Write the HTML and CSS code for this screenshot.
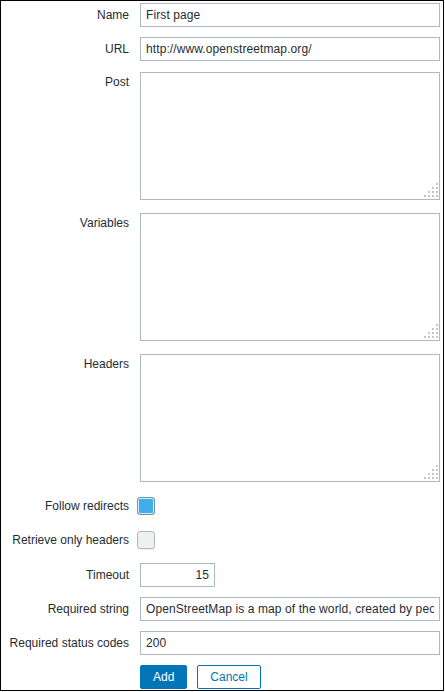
FILE: index.html
```html
<!DOCTYPE html>
<html>
<head>
<meta charset="utf-8">
<link rel="stylesheet" href="styles.css">
</head>
<body>
<div class="frame">
  <form class="form">
    <div class="row r-first">
      <label class="lbl">Name</label>
      <input class="field" type="text" value="First page">
    </div>
    <div class="row">
      <label class="lbl">URL</label>
      <input class="field" type="text" value="http://www.openstreetmap.org/">
    </div>
    <div class="row r-area1 mb3">
      <label class="lbl lbl-top">Post</label>
      <div class="area-wrap">
        <textarea class="area"></textarea>
        <svg class="grip" width="14" height="14" viewBox="0 0 14 14"><g fill="#c3c6c8"><rect x="12" y="0" width="2" height="2"/><rect x="8" y="4" width="2" height="2"/><rect x="12" y="4" width="2" height="2"/><rect x="4" y="8" width="2" height="2"/><rect x="8" y="8" width="2" height="2"/><rect x="12" y="8" width="2" height="2"/><rect x="0" y="12" width="2" height="2"/><rect x="4" y="12" width="2" height="2"/><rect x="8" y="12" width="2" height="2"/><rect x="12" y="12" width="2" height="2"/></g></svg>
      </div>
    </div>
    <div class="row mb3">
      <label class="lbl lbl-top">Variables</label>
      <div class="area-wrap">
        <textarea class="area"></textarea>
        <svg class="grip" width="14" height="14" viewBox="0 0 14 14"><g fill="#c3c6c8"><rect x="12" y="0" width="2" height="2"/><rect x="8" y="4" width="2" height="2"/><rect x="12" y="4" width="2" height="2"/><rect x="4" y="8" width="2" height="2"/><rect x="8" y="8" width="2" height="2"/><rect x="12" y="8" width="2" height="2"/><rect x="0" y="12" width="2" height="2"/><rect x="4" y="12" width="2" height="2"/><rect x="8" y="12" width="2" height="2"/><rect x="12" y="12" width="2" height="2"/></g></svg>
      </div>
    </div>
    <div class="row">
      <label class="lbl lbl-top">Headers</label>
      <div class="area-wrap">
        <textarea class="area"></textarea>
        <svg class="grip" width="14" height="14" viewBox="0 0 14 14"><g fill="#c3c6c8"><rect x="12" y="0" width="2" height="2"/><rect x="8" y="4" width="2" height="2"/><rect x="12" y="4" width="2" height="2"/><rect x="4" y="8" width="2" height="2"/><rect x="8" y="8" width="2" height="2"/><rect x="12" y="8" width="2" height="2"/><rect x="0" y="12" width="2" height="2"/><rect x="4" y="12" width="2" height="2"/><rect x="8" y="12" width="2" height="2"/><rect x="12" y="12" width="2" height="2"/></g></svg>
      </div>
    </div>
    <div class="row r-check1">
      <label class="lbl">Follow redirects</label>
      <span class="check checked"></span>
    </div>
    <div class="row r-check2">
      <label class="lbl">Retrieve only headers</label>
      <span class="check"></span>
    </div>
    <div class="row r-timeout">
      <label class="lbl">Timeout</label>
      <input class="field field-short" type="text" value="15">
    </div>
    <div class="row">
      <label class="lbl">Required string</label>
      <input class="field" type="text" value="OpenStreetMap is a map of the world, created by people like you">
    </div>
    <div class="row">
      <label class="lbl">Required status codes</label>
      <input class="field" type="text" value="200">
    </div>
    <div class="row">
      <span class="lbl"></span>
      <div class="buttons">
        <button type="button" class="btn btn-primary">Add</button>
        <button type="button" class="btn btn-alt">Cancel</button>
      </div>
    </div>
  </form>
</div>
</body>
</html>
```

FILE: styles.css
```css
html, body {
  margin: 0;
  padding: 0;
  background: #ffffff;
}

.frame {
  box-sizing: border-box;
  width: 444px;
  height: 691px;
  border: 1px solid #000000;
  background: #ffffff;
  font-family: "Liberation Sans", Arial, sans-serif;
  font-size: 12px;
  color: #1f2c33;
}

.form {
  display: flex;
  flex-direction: column;
  gap: 10px;
  margin: 0;
}

.row {
  display: flex;
  align-items: flex-start;
  gap: 10px;
  min-height: 24px;
}

.r-first { margin-top: 2px; }
.r-area1 { margin-top: 1px; }
.mb3 { margin-bottom: 3px; }
.r-check1 { margin-top: 2px; }
.r-timeout { margin-top: 1px; }

.r-check1, .r-check2 {
  align-items: center;
  height: 24px;
}

.lbl {
  box-sizing: border-box;
  flex: 0 0 129px;
  width: 129px;
  padding-right: 1px;
  text-align: right;
  line-height: 24px;
  white-space: nowrap;
}

.lbl-top {
  line-height: 20px;
}

.field {
  box-sizing: border-box;
  width: 300px;
  height: 24px;
  margin: 0;
  padding: 0 5px;
  border: 1px solid #acbbc2;
  border-radius: 0;
  background: #ffffff;
  font-family: "Liberation Sans", Arial, sans-serif;
  font-size: 12px;
  letter-spacing: 0.1px;
  color: #1f2c33;
  outline: none;
}

.field-short {
  width: 75px;
  text-align: right;
}

.area-wrap {
  position: relative;
  width: 300px;
  height: 128px;
}

.area {
  display: block;
  box-sizing: border-box;
  width: 300px;
  height: 128px;
  margin: 0;
  padding: 3px 5px;
  border: 1px solid #acbbc2;
  border-radius: 0;
  resize: none;
  font-family: "Liberation Sans", Arial, sans-serif;
  font-size: 12px;
  color: #1f2c33;
  outline: none;
}

.grip {
  position: absolute;
  right: 2px;
  bottom: 3px;
  display: block;
}

.check {
  box-sizing: border-box;
  display: block;
  width: 18px;
  height: 18px;
  margin-left: -3px;
  border: 1px solid #b4b8bb;
  border-radius: 3px;
  background: #eff0f1;
  box-shadow: 0 1px 0 rgba(0, 0, 0, 0.06);
}

.check.checked {
  border-color: #6f93ab;
  background: #3daee9;
  box-shadow: inset 0 0 0 1px #d6ecf8;
}

.buttons {
  display: flex;
  gap: 10px;
}

.btn {
  box-sizing: border-box;
  height: 24px;
  margin: 0;
  padding: 0 12px;
  border: 1px solid #0275b8;
  border-radius: 2px;
  font-family: "Liberation Sans", Arial, sans-serif;
  font-size: 12px;
  line-height: 22px;
  cursor: pointer;
}

.btn-primary {
  background: #0275b8;
  color: #ffffff;
}

.btn-alt {
  background: #ffffff;
  color: #0275b8;
}
```
